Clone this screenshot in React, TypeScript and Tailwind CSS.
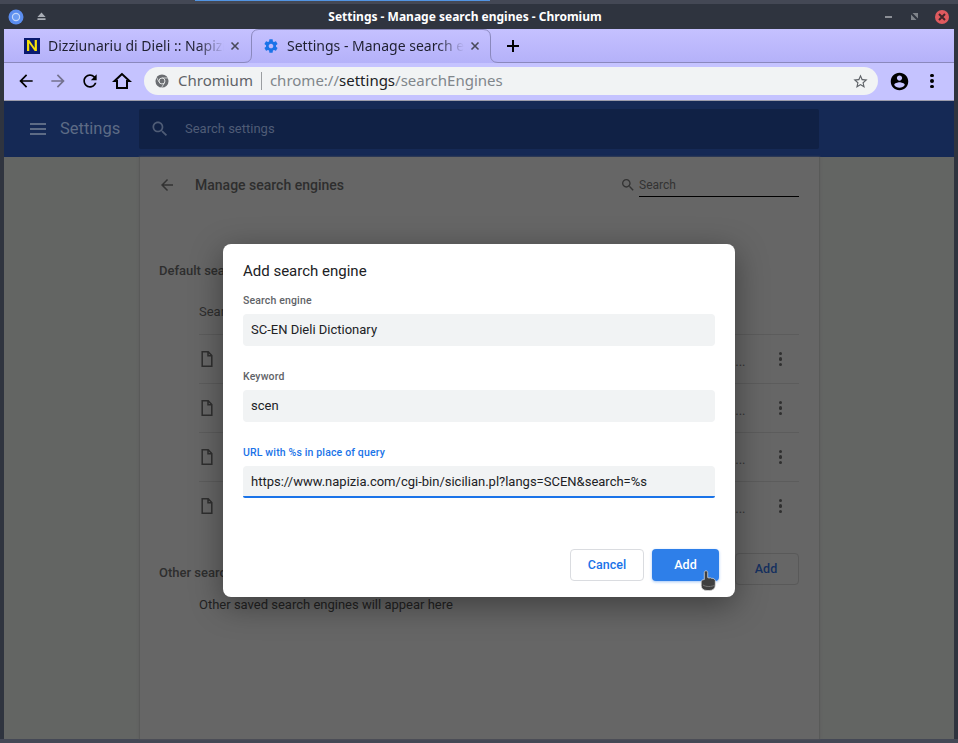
import type { ReactNode } from "react";

const noto = "font-['Noto_Sans',sans-serif]";
const roboto = "font-['Roboto',sans-serif]";

function Icon({ d, className }: { d: string; className?: string }) {
  return (
    <svg viewBox="0 0 24 24" className={className} fill="currentColor">
      <path d={d} />
    </svg>
  );
}

const BACK = "M20 11H7.83l5.59-5.59L12 4l-8 8 8 8 1.41-1.41L7.83 13H20v-2z";
const RELOAD =
  "M17.65 6.35C16.2 4.9 14.21 4 12 4c-4.42 0-7.99 3.58-7.99 8s3.57 8 7.99 8c3.73 0 6.84-2.55 7.73-6h-2.08c-.82 2.33-3.04 4-5.65 4-3.31 0-6-2.69-6-6s2.69-6 6-6c1.66 0 3.14.69 4.22 1.78L13 11h7V4l-2.35 2.35z";
const STAR =
  "M22 9.24l-7.19-.62L12 2 9.19 8.63 2 9.24l5.46 4.73L5.82 21 12 17.27 18.18 21l-1.63-7.03L22 9.24zM12 15.4l-3.76 2.27 1-4.28-3.32-2.88 4.38-.38L12 6.1l1.71 4.04 4.38.38-3.32 2.88 1 4.28L12 15.4z";
const ACCOUNT =
  "M12 2C6.48 2 2 6.48 2 12s4.48 10 10 10 10-4.48 10-10S17.52 2 12 2zm0 3c1.66 0 3 1.34 3 3s-1.34 3-3 3-3-1.34-3-3 1.34-3 3-3zm0 14.2c-2.5 0-4.71-1.28-6-3.22.03-1.99 4-3.08 6-3.08 1.99 0 5.97 1.09 6 3.08-1.29 1.94-3.5 3.22-6 3.22z";
const GEAR =
  "M19.43 12.98c.04-.32.07-.64.07-.98s-.03-.66-.07-.98l2.11-1.65c.19-.15.24-.42.12-.64l-2-3.46c-.12-.22-.39-.3-.61-.22l-2.49 1c-.52-.4-1.08-.73-1.69-.98l-.38-2.65C14.46 2.18 14.25 2 14 2h-4c-.25 0-.46.18-.49.42l-.38 2.65c-.61.25-1.17.59-1.69.98l-2.49-1c-.23-.09-.49 0-.61.22l-2 3.46c-.13.22-.07.49.12.64l2.11 1.65c-.04.32-.07.65-.07.98s.03.66.07.98l-2.11 1.65c-.19.15-.24.42-.12.64l2 3.46c.12.22.39.3.61.22l2.49-1c.52.4 1.08.73 1.69.98l.38 2.65c.03.24.24.42.49.42h4c.25 0 .46-.18.49-.42l.38-2.65c.61-.25 1.17-.59 1.69-.98l2.49 1c.23.09.49 0 .61-.22l2-3.46c.12-.22.07-.49-.12-.64l-2.11-1.65zM12 15.5c-1.93 0-3.5-1.57-3.5-3.5s1.57-3.5 3.5-3.5 3.5 1.57 3.5 3.5-1.57 3.5-3.5 3.5z";
const SEARCH =
  "M15.5 14h-.79l-.28-.27C15.41 12.59 16 11.11 16 9.5 16 5.91 13.09 3 9.5 3S3 5.91 3 9.5 5.91 16 9.5 16c1.61 0 3.09-.59 4.23-1.57l.27.28v.79l5 4.99L20.49 19l-4.99-5zm-6 0C7.01 14 5 11.99 5 9.5S7.01 5 9.5 5 14 7.01 14 9.5 11.99 14 9.5 14z";

function Kebab({ className }: { className: string }) {
  return (
    <span className={`flex flex-col items-center gap-[2px] ${className}`}>
      <span className="h-[3.5px] w-[3.5px] rounded-full bg-current" />
      <span className="h-[3.5px] w-[3.5px] rounded-full bg-current" />
      <span className="h-[3.5px] w-[3.5px] rounded-full bg-current" />
    </span>
  );
}

function FileIcon() {
  return (
    <svg viewBox="0 0 12 16" className="h-[16px] w-[12px] text-[#2f2f2f]" fill="none" stroke="currentColor" strokeWidth="1.5">
      <path d="M1.2.8h6l3.6 3.8v10.6H1.2zM7 .8v4h3.8" />
    </svg>
  );
}

function TitleBar() {
  return (
    <div className="flex h-[25px] items-center bg-[#2f343f] text-white">
      <svg viewBox="0 0 16 16" className="ml-[4px] h-[16px] w-[16px]">
        <circle cx="8" cy="8" r="7.5" fill="#5b8def" />
        <circle cx="8" cy="8" r="3.6" fill="#6c9cf2" stroke="#c3d5f8" strokeWidth="1.2" />
      </svg>
      <svg viewBox="0 0 10 9" className="ml-[13px] h-[9px] w-[9px] text-[#a9adb5]" fill="currentColor">
        <path d="M5 0l4.5 5H.5zM.5 6.500h9v2h-9z" />
      </svg>
      <span className={`${noto} ml-[282px] w-[274px] whitespace-nowrap text-center text-[12px] font-bold`}>
        Settings - Manage search engines - Chromium
      </span>
      <span className="ml-[283px] h-[2px] w-[7px] bg-[#8c8f96]" />
      <svg viewBox="0 0 7 7" className="ml-[19px] h-[7px] w-[7px] text-[#7f838a]" fill="currentColor">
        <path d="M0 1.500L5.500 7H0zM1.500 0H7v5.500z" />
      </svg>
      <span className="ml-[17px] flex h-[14px] w-[14px] items-center justify-center rounded-full bg-[#e05a5f]">
        <svg viewBox="0 0 8 8" className="h-[8px] w-[8px]" stroke="#40262a" strokeWidth="2">
          <path d="M1 1l6 6M7 1L1 7" />
        </svg>
      </span>
    </div>
  );
}

function Tab({ active, title, icon }: { active?: boolean; title: string; icon: ReactNode }) {
  return (
    <div className={`flex h-full items-center ${active ? "w-[240px] pl-[12px] pr-[11px]" : "w-[247px] pl-[20px] pr-[11px]"}`}>
      {icon}
      <span
        className={`${noto} ml-[8px] -mt-[1px] min-w-0 flex-1 overflow-hidden whitespace-nowrap bg-linear-to-r from-[#1f2030] from-85% to-transparent bg-clip-text text-[14px] text-transparent`}
      >
        {title}
      </span>
      <svg viewBox="0 0 10 10" className="ml-[6px] h-[10px] w-[10px] shrink-0" stroke="#4a4a5a" strokeWidth="1.600">
        <path d="M1.500 1.500l7 7M8.500 1.500l-7 7" />
      </svg>
    </div>
  );
}

function TabStrip() {
  return (
    <div className="relative flex h-[34px] items-center bg-linear-to-b from-[#c5c1ff] to-[#b4b1f9]">
      <Tab
        title="Dizziunariu di Dieli :: Napizia"
        icon={
          <span className={`${roboto} flex h-[16px] w-[16px] shrink-0 items-center justify-center bg-[#0a1a6e] text-[14px] font-medium leading-none text-[#f5e10a]`}>
            <span className="scale-x-125">N</span>
          </span>
        }
      />
      <Tab active title="Settings - Manage search engines" icon={<Icon d={GEAR} className="h-[16px] w-[16px] shrink-0 text-[#1a73e8]" />} />
      <svg viewBox="0 0 14 14" className="ml-[15px] h-[14px] w-[14px]" stroke="#000" strokeWidth="2">
        <path d="M7 1v12M1 7h12" />
      </svg>
      <svg className="absolute inset-0 h-[34px] w-[950px]" viewBox="0 0 950 34" fill="none" stroke="#8a88bd">
        <path d="M0 33.500H240Q247.500 33.500 247.500 26V8Q247.500 .5 255 .5H479Q486.500 .5 486.500 8V26Q486.500 33.500 494 33.500H950" />
      </svg>
    </div>
  );
}

function Toolbar() {
  return (
    <div className="flex h-[38px] items-center border-b border-[#9c9cab] bg-[#c5c3ff] pb-[1px]">
      <Icon d={BACK} className="ml-[12px] h-[20px] w-[20px] text-black" />
      <Icon d={BACK} className="ml-[12px] h-[20px] w-[20px] rotate-180 text-[#74728f]" />
      <Icon d={RELOAD} className="ml-[12px] h-[20px] w-[20px] text-black" />
      <svg viewBox="0 0 20 20" className="ml-[12px] h-[20px] w-[20px]" fill="none" stroke="#000" strokeWidth="2">
        <path d="M10 3L2.500 10H5v7h10v-7h2.500z" />
      </svg>
      <div className={`${noto} ml-[12px] flex h-[28px] w-[734px] items-center rounded-full bg-[#f1f3f4] text-[15px]`}>
        <svg viewBox="0 0 16 16" className="ml-[11px] h-[14px] w-[14px]" fill="none">
          <circle cx="8" cy="8" r="7.500" fill="#6a6d71" />
          <path d="M8 4.500h7M5 9.700L1.500 3.500M11 9.700L7.500 15.500" stroke="#f1f3f4" strokeWidth="0.800" />
          <circle cx="8" cy="8" r="3.400" fill="#6a6d71" stroke="#f1f3f4" strokeWidth="1" />
        </svg>
        <span className="ml-[9px] -mt-[1px] text-[#5f6368]">Chromium</span>
        <span className="ml-[8px] h-[18px] w-px bg-[#9a9da1]" />
        <span className="ml-[8px] -mt-[1px] text-[#80868b]">
          chrome://<span className="text-[#202124]">settings</span>/searchEngines
        </span>
        <Icon d={STAR} className="ml-auto mr-[9px] h-[17px] w-[17px] text-[#5f6368]" />
      </div>
      <Icon d={ACCOUNT} className="ml-[11px] h-[21px] w-[21px] text-black" />
      <Kebab className="ml-[20px] text-black" />
    </div>
  );
}

function SettingsHeader() {
  return (
    <div className={`${roboto} flex h-[56px] items-center bg-[#152955]`}>
      <div className="ml-[26px] flex w-[16px] flex-col gap-[3px]">
        <span className="h-[2px] bg-[#5d6b85]" />
        <span className="h-[2px] bg-[#5d6b85]" />
        <span className="h-[2px] bg-[#5d6b85]" />
      </div>
      <span className="ml-[14px] w-[79px] pt-[1px] text-[16.500px] text-[#5d6b85]">Settings</span>
      <div className="flex h-[40px] w-[680px] items-center rounded-[2px] bg-[#102145]">
        <Icon d={SEARCH} className="ml-[11px] h-[20px] w-[20px] text-[#4f5c76]" />
        <span className="ml-[15px] text-[13px] text-[#4f5c76]">Search settings</span>
      </div>
    </div>
  );
}

function EngineRow() {
  return (
    <div className="flex h-[49px] items-center border-t border-[#5c5c5c] pl-[2px]">
      <FileIcon />
      <span className="ml-auto self-center pt-[5px] text-[13px] leading-none text-[#333]">...</span>
      <Kebab className="ml-[33px] mr-[17px] text-[#2f2f2f]" />
    </div>
  );
}

function Page() {
  return (
    <div className={`${roboto} min-h-0 flex-1 bg-[#636563] text-[#2e2e2e]`}>
      <div className="ml-[135px] h-full w-[681px] border-x border-[#595a59] bg-[#666666] pl-[19px] pr-[20px] shadow-[0_0_2px_#5a5a5a]">
        <div className="flex h-[40px] items-center pt-[16px]">
          <Icon d={BACK} className="-ml-[1px] h-[18px] w-[18px] text-[#333]" />
          <span className="ml-[19px] text-[14px] font-medium text-[#2e2e2e]">Manage search engines</span>
          <Icon d={SEARCH} className="ml-auto h-[16px] w-[16px] text-[#333]" />
          <span className="ml-[3px] flex h-[24px] w-[160px] items-center border-b border-black text-[12px] text-[#333]">Search</span>
        </div>
        <p className="mt-[64px] text-[13px] font-medium">Default search engines</p>
        <p className="mt-[21px] ml-[40px] text-[13px]">Search engine</p>
        <div className="mt-[13px] ml-[40px]">
          <EngineRow />
          <EngineRow />
          <EngineRow />
          <EngineRow />
        </div>
        <div className="mt-[23px] flex h-[32px] items-center">
          <span className="mt-[8px] text-[13px] font-medium">Other search engines</span>
          <span className="ml-auto flex h-[32px] w-[64px] items-center justify-center rounded-[4px] border border-[#595959] pr-[2px] text-[12.500px] font-medium text-[#15305f]">
            Add
          </span>
        </div>
        <p className="mt-[10px] ml-[40px] text-[13px] text-[#222]">Other saved search engines will appear here</p>
      </div>
    </div>
  );
}

function Field({ label, value, focused }: { label: string; value: string; focused?: boolean }) {
  return (
    <div>
      <p className={`h-[14px] text-[10.500px] font-medium leading-[12px] tracking-[0.15px] ${focused ? "text-[#1a73e8]" : "text-[#5f6368]"}`}>
        {label}
      </p>
      <div
        className={`mt-[5px] flex h-[32px] items-center rounded-[4px] bg-[#f1f3f4] pl-[8px] text-[13px] text-[#202124] ${
          focused ? "rounded-b-[2px] border-b-2 border-[#1a73e8] pt-[2px]" : ""
        }`}
      >
        {value}
      </div>
    </div>
  );
}

function Dialog() {
  return (
    <div className={`${roboto} absolute left-[223px] top-[244px] flex h-[353px] w-[512px] flex-col rounded-[8px] bg-white shadow-[0_8px_32px_rgba(0,0,0,0.4)]`}>
      <div className="flex flex-col px-[20px]">
        <h2 className="mt-[17px] text-[15px] leading-[20px] text-[#202124]">Add search engine</h2>
        <div className="mt-[14px] flex flex-col gap-[25px]">
          <Field label="Search engine" value="SC-EN Dieli Dictionary" />
          <Field label="Keyword" value="scen" />
          <Field focused label="URL with %s in place of query" value="https://www.napizia.com/cgi-bin/sicilian.pl?langs=SCEN&search=%s" />
        </div>
      </div>
      <div className="mt-[51px] flex justify-end gap-[8px] pr-[16px]">
        <button type="button" className="h-[32px] w-[74px] rounded-[4px] border border-[#dadce0] bg-white text-[12.500px] font-medium text-[#1a73e8]">
          Cancel
        </button>
        <button type="button" className="h-[32px] w-[67px] rounded-[4px] bg-[#2e7fe9] text-[12.500px] font-medium text-white shadow-[0_1px_3px_rgba(26,115,232,0.4)]">
          Add
        </button>
      </div>
      <svg viewBox="0 0 18 22" className="absolute left-[477px] top-[326px] h-[22px] w-[18px]">
        <path
          d="M6 .8c1 0 1.700.8 1.700 1.800v5l1.300.4 1.500-.2 1.200.6 1.300-.1 1.400.8.9 1.300v4.600c0 3.700-2.500 5.500-6 5.500H7c-3.500 0-5.800-1.900-5.800-5v-3.600c0-1.300 1-2.100 2.100-2.200l1-.1V2.600c0-1 .7-1.800 1.700-1.800z"
          fill="#3f3f3f"
          stroke="#e4e4e4"
          strokeWidth="0.700"
        />
        <path d="M3 15c2.500 2 9 2 12 0" fill="none" stroke="#777" strokeWidth="1" />
      </svg>
    </div>
  );
}

export default function App() {
  return (
    <div className="relative flex h-[743px] w-[958px] flex-col overflow-hidden bg-[#444855]">
      <div className="h-[4px]">
        <div className="ml-[195px] h-[1px] w-[295px] bg-[#5294e2]" />
      </div>
      <div className="flex min-h-0 flex-1 flex-col border-x-4 border-[#2f343f]">
        <TitleBar />
        <TabStrip />
        <Toolbar />
        <SettingsHeader />
        <Page />
      </div>
      <div className="h-[4px]" />
      <Dialog />
    </div>
  );
}
